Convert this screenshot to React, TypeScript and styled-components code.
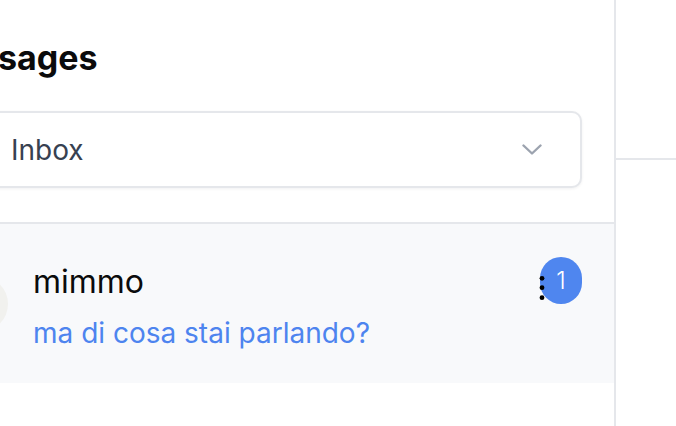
import React from "react";
import styled, { createGlobalStyle } from "styled-components";

const Global = createGlobalStyle`
  html, body { margin: 0; padding: 0; background: #ffffff; }
  body { font-family: Inter, "Noto Sans", "Liberation Sans", sans-serif; -webkit-font-smoothing: antialiased; }
  * { box-sizing: border-box; }
`;

const Page = styled.div`
  display: flex;
  width: 676px;
  height: 426px;
  overflow: hidden;
`;

const Sidebar = styled.aside`
  flex: 0 0 616px;
  display: flex;
  flex-direction: column;
  border-right: 2px solid #e5e7eb;
  overflow: hidden;
`;

const Header = styled.header`
  padding-top: 38px;
  height: 111px;
  overflow: hidden;
`;

const Title = styled.h1`
  margin: 0 0 0 -73px;
  font-size: 34px;
  font-weight: 700;
  line-height: 40px;
  color: #0b0b0c;
  white-space: nowrap;
`;

const FilterWrap = styled.div`
  height: 113px;
  border-bottom: 2px solid #e5e7eb;
`;

const Select = styled.button`
  display: flex;
  align-items: center;
  justify-content: space-between;
  margin-left: -24px;
  width: 606px;
  height: 77px;
  padding: 0 38px 0 33px;
  background: #ffffff;
  border: 2px solid #e5e7eb;
  border-radius: 10px;
  box-shadow: 0 1px 3px rgba(17, 24, 39, 0.06);
  font-family: inherit;
  font-size: 28px;
  color: #374151;
  cursor: pointer;
`;

const List = styled.ul`
  margin: 0;
  padding: 0;
  list-style: none;
`;

const Row = styled.li`
  display: flex;
  align-items: flex-start;
  height: 159px;
  padding: 0 32px 0 0;
  background: #f8f9fb;
`;

const Avatar = styled.div`
  align-self: center;
  flex: 0 0 56px;
  height: 56px;
  margin-left: -48px;
  border-radius: 50%;
  background: #f1f1ee;
`;

const Texts = styled.div`
  flex: 1;
  display: flex;
  flex-direction: column;
  gap: 13px;
  margin: 38px 0 0 25px;
`;

const Name = styled.div`
  font-size: 32px;
  line-height: 40px;
  color: #0b0b0c;
`;

const Preview = styled.div`
  font-size: 28px;
  line-height: 36px;
  color: #4d84ef;
`;

const Badge = styled.span`
  position: relative;
  display: flex;
  align-items: center;
  justify-content: center;
  width: 42px;
  height: 47px;
  margin-top: 33px;
  border-radius: 999px;
  background: #4f86ef;
  color: #ffffff;
  font-size: 24px;
  font-weight: 300;
`;

const More = styled.svg`
  position: absolute;
  left: -1px;
  top: 18px;
`;

const Detail = styled.section`
  flex: 1;
`;

const DetailHeader = styled.div`
  height: 160px;
  border-bottom: 2px solid #e5e7eb;
`;

export default function App() {
  return (
    <>
      <Global />
      <Page>
        <Sidebar>
          <Header>
            <Title>Messages</Title>
          </Header>
          <FilterWrap>
            <Select>
              <span>Inbox</span>
              <svg width="20" height="11" viewBox="0 0 20 11" fill="none">
                <path d="M1.5 1.5l8.5 8 8.5-8" stroke="#9ca3af" strokeWidth="2.4" strokeLinecap="round" strokeLinejoin="round" />
              </svg>
            </Select>
          </FilterWrap>
          <List>
            <Row>
              <Avatar />
              <Texts>
                <Name>mimmo</Name>
                <Preview>ma di cosa stai parlando?</Preview>
              </Texts>
              <Badge>
                1
                <More width="6" height="26" viewBox="0 0 6 26">
                  <circle cx="3" cy="3.3" r="2.4" fill="#000" />
                  <circle cx="3" cy="12.7" r="2.4" fill="#000" />
                  <circle cx="3" cy="22.7" r="2.4" fill="#000" />
                </More>
              </Badge>
            </Row>
          </List>
        </Sidebar>
        <Detail>
          <DetailHeader />
        </Detail>
      </Page>
    </>
  );
}
